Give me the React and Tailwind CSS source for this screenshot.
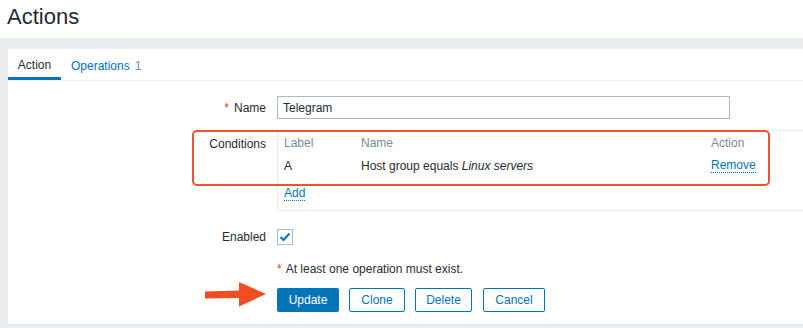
const FONT = { fontFamily: '"Liberation Sans", Arial, sans-serif' };

function CheckIcon() {
  return (
    <svg width="12" height="10" viewBox="0 0 12 10">
      <path d="M1.5 5 L4.5 8 L10.5 1.5" fill="none" stroke="#0275b8" strokeWidth="2" />
    </svg>
  );
}

function Arrow() {
  return (
    <svg width="62" height="26" viewBox="0 0 62 26">
      <path d="M0 9.5 L34 8.5 L34 0 L61 12 L34 24.5 L34 16 L0 16.5 Z" fill="#f04d24" />
    </svg>
  );
}

export default function App() {
  return (
    <div className="w-[803px] h-[328px] overflow-hidden bg-[#ebeef0] text-[#1f2c33] text-[12px]" style={FONT}>
      <div className="h-[38px] bg-white px-[7px] pt-[3px]">
        <h1 className="text-[22px] leading-[28px] text-[#1f2c33]">Actions</h1>
      </div>

      <div className="ml-[8px] mt-[11px] h-[276px] bg-white border-b border-[#dfe4e7]">
        {/* tabs */}
        <div className="flex h-[32px] border-b border-[#ebeef0]">
          <div className="w-[53px] flex items-center justify-center border-b-[3px] border-[#0275b8] pt-[3px]">Action</div>
          <div className="flex items-center pl-[10px] pt-[3px] text-[#0275b8]">
            Operations <span className="ml-[5px] text-[#768d99]">1</span>
          </div>
        </div>

        {/* name */}
        <div className="flex items-center mt-[15px] h-[23px]">
          <div className="w-[258px] text-right">
            <span className="text-[#e33734] mr-[5px]">*</span>Name
          </div>
          <input
            readOnly
            value="Telegram"
            className="ml-[11px] w-[453px] h-[23px] border border-[#acbbc2] px-[5px] text-[12px] outline-none"
            style={FONT}
          />
        </div>

        {/* conditions */}
        <div className="relative flex mt-[11px]">
          <div className="w-[258px] text-right pt-[5px]">Conditions</div>
          <div className="ml-[11px] flex-1 h-[81px] border-l border-y border-[#ebeef0] pl-[6px]">
            <div className="flex h-[24px] items-center text-[#768d99]">
              <div className="w-[77px]">Label</div>
              <div className="w-[350px]">Name</div>
              <div>Action</div>
            </div>
            <div className="flex h-[22px] items-center">
              <div className="w-[77px]">A</div>
              <div className="w-[350px]">
                Host group equals <i>Linux servers</i>
              </div>
              <div className="text-[#0275b8] border-b border-dotted border-[#0275b8] leading-[13px]">Remove</div>
            </div>
            <div className="flex h-[24px] mt-[5px] items-center">
              <span className="text-[#0275b8] border-b border-dotted border-[#0275b8] leading-[13px]">Add</span>
            </div>
          </div>
          <div className="absolute left-[184px] top-[0px] w-[578px] h-[56px] border-2 border-[#f2512f] rounded-[5px]" />
        </div>

        {/* enabled */}
        <div className="flex items-center mt-[18px] h-[16px]">
          <div className="w-[258px] text-right">Enabled</div>
          <div className="ml-[11px] w-[16px] h-[16px] border border-[#acbbc2] flex items-center justify-center">
            <CheckIcon />
          </div>
        </div>

        {/* message */}
        <div className="ml-[269px] mt-[17px] h-[14px] leading-[14px]">
          <span className="text-[#e33734] mr-[4px]">*</span>At least one operation must exist.
        </div>

        {/* buttons */}
        <div className="relative flex ml-[269px] mt-[12px] gap-[10px]">
          <div className="absolute left-[-72px] top-[-6px]">
            <Arrow />
          </div>
          <button className="w-[62px] h-[24px] rounded-[2px] bg-[#0275b8] text-white">Update</button>
          <button className="w-[56px] h-[24px] rounded-[2px] border border-[#0275b8] text-[#0275b8] bg-white">Clone</button>
          <button className="w-[57px] h-[24px] rounded-[2px] border border-[#0275b8] text-[#0275b8] bg-white">Delete</button>
          <button className="ml-[1px] w-[62px] h-[24px] rounded-[2px] border border-[#0275b8] text-[#0275b8] bg-white">Cancel</button>
        </div>
      </div>
    </div>
  );
}
